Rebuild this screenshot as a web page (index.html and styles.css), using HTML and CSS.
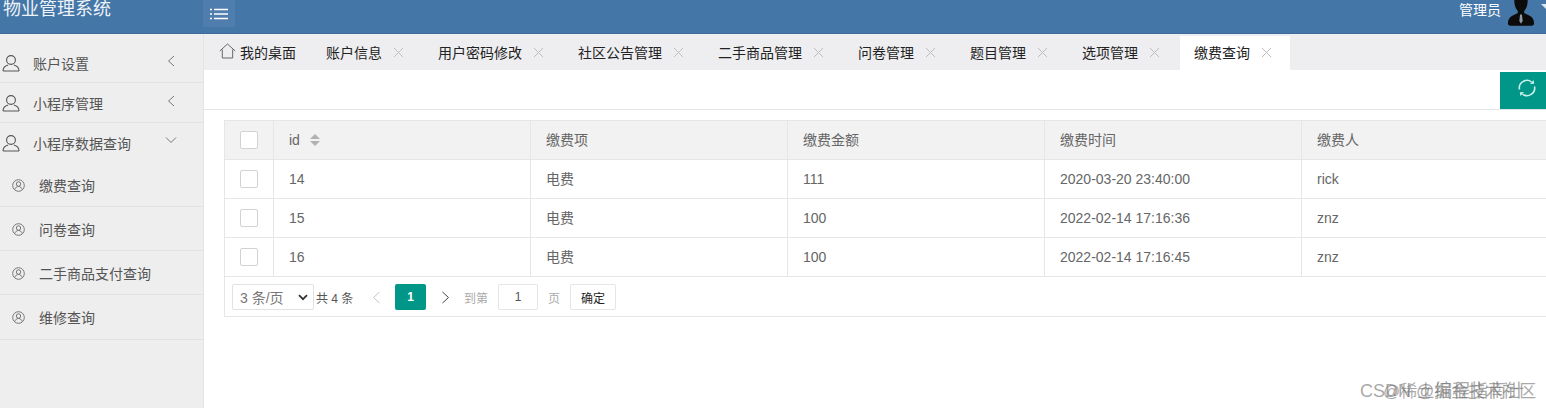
FILE: index.html
```html
<!DOCTYPE html>
<html lang="zh">
<head>
<meta charset="utf-8">
<title>物业管理系统</title>
<link rel="stylesheet" href="styles.css">
</head>
<body>
<header class="topbar">
  <div class="logo">物业管理系统</div>
  <button class="menu-btn" aria-label="menu">
    <svg width="18" height="12" viewBox="0 0 18 12"><path d="M0 1.5h2M4 1.5h14M0 6h2M4 6h14M0 10.500h2M4 10.500h14" stroke="#fff" stroke-width="1.300" fill="none"/></svg>
  </button>
  <div class="user">
    <span class="user-name">管理员</span>
    <svg class="avatar" width="28" height="27" viewBox="0 0 30 28"><path d="M8 -2h14c.6 5-.6 10-3.400 13l-.3 2.500 6 3c3 1.500 4.700 4.500 4.700 8 0 1.500-1 2.500-2.500 2.500H3.500C2 27 1 26 1 24.500 1 21 2.700 18 5.700 16.500l6-3-.3-2.500C8.600 8 7.400 3 8 -2z" fill="#0b0b0b"/><path d="M14 15h2l.8 7-1.800 3-1.800-3z" fill="#8f9aa3"/></svg>
    <span class="caret"></span>
  </div>
</header>
<div class="body">
  <aside class="side">
    <div class="nav-item">
      <svg class="ic-user" width="18" height="18" viewBox="0 0 18 18"><circle cx="9" cy="6" r="4.400"/><path d="M1 17c0-3.500 3-5.500 5.200-6M17 17c0-3.500-3-5.500-5.200-6M1 17h16"/></svg>
      <span class="nav-text">账户设置</span>
      <svg class="chev" width="8" height="12" viewBox="0 0 8 12"><path d="M7 1L1.500 6 7 11"/></svg>
    </div>
    <div class="nav-item">
      <svg class="ic-user" width="18" height="18" viewBox="0 0 18 18"><circle cx="9" cy="6" r="4.400"/><path d="M1 17c0-3.500 3-5.500 5.200-6M17 17c0-3.500-3-5.500-5.200-6M1 17h16"/></svg>
      <span class="nav-text">小程序管理</span>
      <svg class="chev" width="8" height="12" viewBox="0 0 8 12"><path d="M7 1L1.500 6 7 11"/></svg>
    </div>
    <div class="nav-item open">
      <svg class="ic-user" width="18" height="18" viewBox="0 0 18 18"><circle cx="9" cy="6" r="4.400"/><path d="M1 17c0-3.500 3-5.500 5.200-6M17 17c0-3.500-3-5.500-5.200-6M1 17h16"/></svg>
      <span class="nav-text">小程序数据查询</span>
      <svg class="chev-down" width="12" height="8" viewBox="0 0 12 8"><path d="M1 1.500L6 6.500 11 1.500"/></svg>
    </div>
    <div class="sub-item">
      <svg class="ic-sub" width="13" height="13" viewBox="0 0 13 13"><circle cx="6.500" cy="6.500" r="5.800"/><circle cx="6.500" cy="5" r="2.200"/><path d="M2.700 10.500c.7-2 2-3 3.800-3s3.100 1 3.800 3"/></svg>
      <span>缴费查询</span>
    </div>
    <div class="sub-item">
      <svg class="ic-sub" width="13" height="13" viewBox="0 0 13 13"><circle cx="6.500" cy="6.500" r="5.800"/><circle cx="6.500" cy="5" r="2.200"/><path d="M2.700 10.500c.7-2 2-3 3.800-3s3.100 1 3.800 3"/></svg>
      <span>问卷查询</span>
    </div>
    <div class="sub-item">
      <svg class="ic-sub" width="13" height="13" viewBox="0 0 13 13"><circle cx="6.500" cy="6.500" r="5.800"/><circle cx="6.500" cy="5" r="2.200"/><path d="M2.700 10.500c.7-2 2-3 3.800-3s3.100 1 3.800 3"/></svg>
      <span>二手商品支付查询</span>
    </div>
    <div class="sub-item last">
      <svg class="ic-sub" width="13" height="13" viewBox="0 0 13 13"><circle cx="6.500" cy="6.500" r="5.800"/><circle cx="6.500" cy="5" r="2.200"/><path d="M2.700 10.500c.7-2 2-3 3.800-3s3.100 1 3.800 3"/></svg>
      <span>维修查询</span>
    </div>
  </aside>
  <main class="main">
    <nav class="tabs">
      <div class="tab home">
        <svg class="ic-home" width="17" height="16" viewBox="0 0 17 16"><path d="M.8 8L8.500 1 16.200 8M3.300 6.500V15h10.400V6.500"/></svg>
        <span>我的桌面</span>
      </div>
      <div class="tab"><span>账户信息</span><svg class="x" width="11" height="11" viewBox="0 0 11 11"><path d="M1 1l9 9M10 1l-9 9"/></svg></div>
      <div class="tab"><span>用户密码修改</span><svg class="x" width="11" height="11" viewBox="0 0 11 11"><path d="M1 1l9 9M10 1l-9 9"/></svg></div>
      <div class="tab"><span>社区公告管理</span><svg class="x" width="11" height="11" viewBox="0 0 11 11"><path d="M1 1l9 9M10 1l-9 9"/></svg></div>
      <div class="tab"><span>二手商品管理</span><svg class="x" width="11" height="11" viewBox="0 0 11 11"><path d="M1 1l9 9M10 1l-9 9"/></svg></div>
      <div class="tab"><span>问卷管理</span><svg class="x" width="11" height="11" viewBox="0 0 11 11"><path d="M1 1l9 9M10 1l-9 9"/></svg></div>
      <div class="tab"><span>题目管理</span><svg class="x" width="11" height="11" viewBox="0 0 11 11"><path d="M1 1l9 9M10 1l-9 9"/></svg></div>
      <div class="tab"><span>选项管理</span><svg class="x" width="11" height="11" viewBox="0 0 11 11"><path d="M1 1l9 9M10 1l-9 9"/></svg></div>
      <div class="tab active"><span>缴费查询</span><svg class="x" width="11" height="11" viewBox="0 0 11 11"><path d="M1 1l9 9M10 1l-9 9"/></svg></div>
    </nav>
    <div class="toolbar">
      <button class="refresh" aria-label="refresh">
        <svg width="18" height="18" viewBox="0 0 18 18"><path d="M1.500 10.500A7.600 7.600 0 0 1 13.500 2.900M16.500 7.500A7.600 7.600 0 0 1 4.500 15.100" fill="none" stroke="#c9f1ea" stroke-width="1.600"/><path d="M12 5l4.200-.2-.6-3.800zM6 13l-4.200.2.600 3.800z" fill="#c9f1ea"/></svg>
      </button>
    </div>
    <section class="content">
      <div class="table-box">
        <div class="row head">
          <div class="cell c0"><span class="check"></span></div>
          <div class="cell c1">id<span class="sort"><i class="up"></i><i class="down"></i></span></div>
          <div class="cell c2 cjk">缴费项</div>
          <div class="cell c2 cjk">缴费金额</div>
          <div class="cell c2 cjk">缴费时间</div>
          <div class="cell c3 cjk">缴费人</div>
        </div>
        <div class="row">
          <div class="cell c0"><span class="check"></span></div>
          <div class="cell c1">14</div>
          <div class="cell c2 cjk">电费</div>
          <div class="cell c2">111</div>
          <div class="cell c2">2020-03-20 23:40:00</div>
          <div class="cell c3">rick</div>
        </div>
        <div class="row">
          <div class="cell c0"><span class="check"></span></div>
          <div class="cell c1">15</div>
          <div class="cell c2 cjk">电费</div>
          <div class="cell c2">100</div>
          <div class="cell c2">2022-02-14 17:16:36</div>
          <div class="cell c3">znz</div>
        </div>
        <div class="row">
          <div class="cell c0"><span class="check"></span></div>
          <div class="cell c1">16</div>
          <div class="cell c2 cjk">电费</div>
          <div class="cell c2">100</div>
          <div class="cell c2">2022-02-14 17:16:45</div>
          <div class="cell c3">znz</div>
        </div>
        <div class="pager">
          <div class="select"><span>3 条/页</span><svg width="10" height="7" viewBox="0 0 10 7"><path d="M1 1.200L5 5.200 9 1.200"/></svg></div>
          <span class="total">共 4 条</span>
          <svg class="prev" width="9" height="13" viewBox="0 0 9 13"><path d="M7.500 1L1.500 6.500l6 5.500"/></svg>
          <span class="cur">1</span>
          <svg class="next" width="9" height="13" viewBox="0 0 9 13"><path d="M1.500 1l6 5.500-6 5.500"/></svg>
          <span class="lbl to">到第</span>
          <span class="jump">1</span>
          <span class="lbl pg">页</span>
          <span class="ok">确定</span>
        </div>
      </div>
      <div class="watermark">
        <span class="wm1">CSDN @编程指南针</span>
        <span class="wm2">@稀土掘金技术社区</span>
      </div>
    </section>
  </main>
</div>
</body>
</html>
```
FILE: styles.css
```css
* { box-sizing: border-box; }
html, body { margin: 0; padding: 0; }
body {
  width: 1546px;
  height: 408px;
  overflow: hidden;
  background: #fff;
  font-family: "Liberation Sans", "Noto Sans CJK SC", sans-serif;
  font-size: 14px;
  color: #666;
}
.topbar {
  height: 34px;
  background: #4476a7;
  border-bottom: 1px solid #3d6c9c;
  display: flex;
  align-items: flex-start;
  color: #fff;
}
.logo {
  width: 203px;
  padding-left: 3px;
  font-size: 18px;
  line-height: 18px;
  color: #eef3f8;
}
.menu-btn {
  width: 32px;
  height: 27px;
  background: #4f7eae;
  border: 0;
  padding: 0;
  display: flex;
  align-items: center;
  justify-content: center;
}
.user {
  margin-left: auto;
  display: flex;
  align-items: flex-start;
  height: 33px;
}
.user-name { font-size: 14px; line-height: 20px; margin-right: 6px; }
.caret {
  width: 0;
  height: 0;
  margin-top: 4px;
  margin-left: 6px;
  margin-right: -5px;
  border: 5px solid transparent;
  border-top-color: #dfe8f1;
}
.body { display: flex; height: 374px; }
.side {
  width: 204px;
  flex: none;
  background: #eeeeee;
  border-right: 1px solid #e4e4e4;
  padding-top: 9px;
}
.nav-item {
  height: 40px;
  display: flex;
  align-items: center;
  padding-left: 2px;
  border-bottom: 1px solid #e2e2e2;
  color: #555;
}
.nav-item.open { border-bottom: 0; height: 40px; }
.nav-text { margin-left: 13px; font-size: 14px; }
.ic-user { fill: none; stroke: #555; stroke-width: 1.100; }
.chev { margin-left: auto; margin-right: 28px; fill: none; stroke: #777; stroke-width: 1; margin-bottom: 4px; }
.chev-down { margin-left: auto; margin-right: 26px; fill: none; stroke: #777; stroke-width: 1; margin-bottom: 6px; }
.sub-item {
  height: 44px;
  display: flex;
  align-items: center;
  padding-left: 12px;
  border-bottom: 1px solid #e2e2e2;
  color: #555;
  font-size: 14px;
}
.sub-item.last { height: 45px; padding-bottom: 1px; }
.sub-item span { margin-left: 14px; }
.ic-sub { fill: none; stroke: #777; stroke-width: 1; margin-top: 2px; }
.main { flex: 1; min-width: 0; display: flex; flex-direction: column; }
.tabs {
  height: 36px;
  background: #eeeef1;
  display: flex;
  align-items: stretch;
  flex: none;
}
.tab {
  display: flex;
  align-items: center;
  padding: 0 0 0 22px;
  font-size: 14px;
  color: #222;
}
.tab.home { padding-left: 15px; width: 100px; }
.tab:nth-child(2) { width: 112px; }
.tab:nth-child(3), .tab:nth-child(4), .tab:nth-child(5) { width: 140px; }
.tab:nth-child(6), .tab:nth-child(7) { width: 112px; }
.tab:nth-child(8) { width: 120px; }
.tab:nth-child(9) { width: 110px; padding-left: 14px; }
.tab.active { background: #fff; margin-top: 2px; padding-bottom: 2px; }
.x { margin-left: 11px; fill: none; stroke: #bdbdbd; stroke-width: 1; }
.ic-home { fill: none; stroke: #666; stroke-width: 1; margin-right: 4px; margin-bottom: 2px; }
.toolbar {
  height: 40px;
  flex: none;
  border-bottom: 1px solid #e6e6e6;
  display: flex;
  justify-content: flex-end;
  align-items: flex-end;
}
.refresh {
  width: 46px;
  height: 37px;
  background: #009688;
  border: 0;
  padding: 0 0 6px 8px;
  display: flex;
  align-items: center;
  justify-content: center;
}
.content { flex: 1; padding: 10px 0 0 20px; position: relative; min-height: 0; }
.table-box {
  width: 1322px;
  border: 1px solid #e6e6e6;
  border-right: 0;
}
.row { display: flex; height: 39px; border-bottom: 1px solid #e6e6e6; }
.row.head { background: #f2f2f2; height: 39px; }
.cell {
  display: flex;
  align-items: center;
  padding-left: 15px;
  border-right: 1px solid #e6e6e6;
  font-size: 14px;
  color: #666;
  flex: none;
}
.cell.cjk { padding-bottom: 2px; }
.c0 { width: 49px; }
.c1 { width: 257px; }
.c2 { width: 257px; }
.c3 { width: 245px; border-right: 0; }
.check {
  width: 18px;
  height: 18px;
  background: #fff;
  border: 1px solid #d2d2d2;
  border-radius: 2px;
}
.sort { display: inline-flex; flex-direction: column; gap: 2px; margin-left: 10px; }
.sort i { width: 0; height: 0; border: 5px solid transparent; }
.sort .up { border-top: 0; border-bottom-color: #b2b2b2; }
.sort .down { border-bottom: 0; border-top-color: #b2b2b2; }
.pager {
  height: 39px;
  display: flex;
  align-items: center;
  padding: 1px 0 0 7px;
  font-size: 12px;
  color: #666;
}
.select {
  width: 82px;
  height: 26px;
  border: 1px solid #e2e2e2;
  border-radius: 2px;
  display: flex;
  align-items: center;
  justify-content: space-between;
  padding: 0 5px 0 7px;
  font-size: 14px;
  color: #777;
}
.select svg { fill: none; stroke: #333; stroke-width: 1.800; }
.total { margin-left: 2px; width: 55px; color: #555; }
.prev { fill: none; stroke: #c4c4c4; stroke-width: 1; margin-left: 1px; }
.cur {
  width: 31px;
  height: 26px;
  margin-left: 14px;
  background: #009688;
  border-radius: 2px;
  color: #fff;
  font-weight: 700;
  display: flex;
  align-items: center;
  justify-content: center;
}
.next { fill: none; stroke: #444; stroke-width: 1; margin-left: 15px; }
.lbl { color: #aaa; }
.to { margin-left: 14px; }
.jump {
  width: 40px;
  height: 26px;
  margin-left: 10px;
  border: 1px solid #e6e6e6;
  border-radius: 2px;
  display: flex;
  align-items: center;
  justify-content: center;
  color: #555;
}
.pg { margin-left: 10px; }
.ok {
  width: 46px;
  height: 26px;
  margin-left: 10px;
  border: 1px solid #e6e6e6;
  border-radius: 2px;
  display: flex;
  align-items: center;
  justify-content: center;
  color: #222;
}
.watermark {
  position: absolute;
  left: 1156px;
  top: 266px;
  width: 190px;
  height: 30px;
  color: rgba(110,110,110,.6);
}
.watermark span { position: absolute; white-space: nowrap; }
.wm1 { left: 0; top: 0; font-size: 18px; }
.wm2 { left: 23px; top: 1px; font-size: 17px; }
```
